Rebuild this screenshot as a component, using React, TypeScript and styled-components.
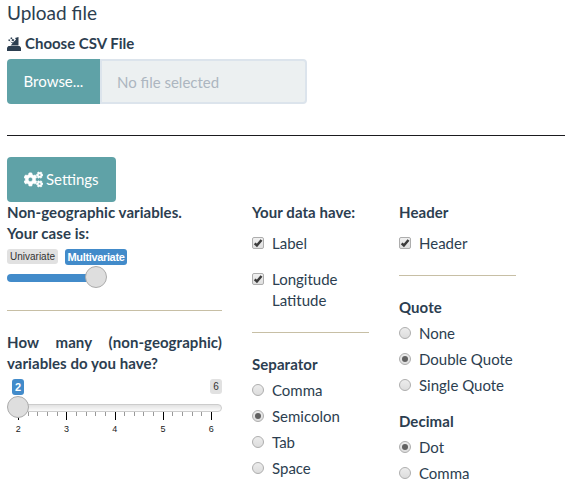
import React from 'react';
import styled, { createGlobalStyle } from 'styled-components';
import { FaCogs } from 'react-icons/fa';

const Global = createGlobalStyle`
  * { box-sizing: border-box; }
  body { margin: 0; background: #fff; color: #2c3e50; font: 15px/21px Lato, sans-serif; overflow: hidden; }
`;

const Page = styled.main`width: 572px; height: 495px; padding: 2px 7px 0; overflow: hidden;`;
const Title = styled.h4`margin: 0; font-size: 19px; line-height: 22px; font-weight: 400;`;
const FileLabel = styled.div`
  display: flex; align-items: center; gap: 4px; height: 21px; margin-top: 9px; font-weight: 700;
  svg { display: block; }
`;
const FileRow = styled.div`display: flex; width: 300px; height: 45px; margin-top: 5px;`;
const Browse = styled.button`
  width: 93px; padding: 0; border: 0; border-radius: 4px 0 0 4px;
  background: #5fa2a7; color: #fff; font: 15px/21px Lato, sans-serif;
`;
const FileName = styled.div`
  flex: 1; border: 2px solid #dce4ec; border-radius: 0 4px 4px 0; padding: 11px 15px;
  background: #ecf0f1; color: #acb6c0; line-height: 21px;
`;
const PageRule = styled.div`width: 558px; height: 1px; margin: 31px 0 21px; background: #1b1b1f;`;
const Settings = styled.button`
  display: flex; align-items: center; gap: 3px; width: 109px; height: 45px; padding: 0 0 0 17px;
  border: 0; border-radius: 4px; background: #5fa2a7; color: #fff; font: 15px/21px Lato, sans-serif;
  svg { stroke: #fff; stroke-width: 18px; }
`;
const Columns = styled.div`display: grid; grid-template-columns: 215px 117px 117px; column-gap: 30px;`;
const Column = styled.section`display: flex; flex-direction: column; min-width: 0;`;
const Heading = styled.div<{ $top?: number; $justify?: boolean }>`
  margin-top: ${p => p.$top ?? 0}px; font-weight: 700; line-height: 21px; letter-spacing: 0.06px;
  text-align: ${p => (p.$justify ? 'justify' : 'left')};
`;
const Rule = styled.div<{ $top: number; $bottom: number }>`
  height: 1px; margin: ${p => p.$top}px 0 ${p => p.$bottom}px; background: #c7bfa5;
`;
const Option = styled.label<{ $top: number }>`
  display: grid; grid-template-columns: 12px 1fr; column-gap: 8px; margin-top: ${p => p.$top}px; line-height: 21px;
  svg { margin-top: 4px; display: block; }
`;
const Tags = styled.div<{ $between?: boolean }>`
  display: flex; align-items: flex-start; height: 17px; margin-top: 5px;
  justify-content: ${p => (p.$between ? 'space-between' : 'flex-start')};
  gap: 7px; padding-left: ${p => (p.$between ? 5 : 0)}px;
`;
const Tag = styled.span<{ $active?: boolean; $width: number }>`
  width: ${p => p.$width}px; height: ${p => (p.$active ? 16 : 15)}px; border-radius: 3px; text-align: center;
  font: ${p => (p.$active ? '700 11px/16px' : '400 10px/16px')} "Liberation Sans", Arial, sans-serif;
  background: ${p => (p.$active ? '#428bca' : '#e1e1e1')}; color: ${p => (p.$active ? '#fff' : '#333')};
  white-space: nowrap; letter-spacing: ${p => (p.$active && p.$width > 20 ? '-0.35px' : 'normal')};
`;
const Slider = styled.div<{ $width: number }>`
  display: flex; align-items: center; width: ${p => p.$width}px; height: 22px;
`;
const Track = styled.div<{ $filled?: boolean }>`
  flex: 1; height: 8px; border-radius: ${p => (p.$filled ? '4px 0 0 4px' : '0 4px 4px 0')};
  background: ${p => (p.$filled ? '#428bca' : 'linear-gradient(#e2e2e2, #fafafa)')};
  border: ${p => (p.$filled ? '0' : '1px solid #ccc')};
  margin-top: 2px;
`;
const Knob = styled.div<{ $last?: boolean }>`
  position: relative; z-index: 1; flex: none; width: 22px; height: 22px;
  border: 1px solid #ababab; border-radius: 50%; background: #dedede;
  margin-left: ${p => (p.$last ? -2 : 0)}px; margin-right: ${p => (p.$last ? 0 : -2)}px;
`;
const Scale = styled.svg`display: block; width: 215px; height: 24px; margin-top: -6px; overflow: visible;`;

const UploadIcon = () => (
  <svg width="14" height="14" viewBox="0 0 14 14" fill="#2c3e50">
    <path d="M1.5 9h11L14 10.5V14H0v-3.5z" />
    <path d="M3 4.5L6 5.5 9 2.5 8 1 11.5 0v8.5H3.5L5.5 6.5z" />
    <path d="M4 .2l1.6.8-1 1.2-1.3-.8zM1.8 2.2l1.6.5-.8 1.5-1.4-.7zM5.3 2l2 .5L6.5 4.5 4.5 3.6z" />
  </svg>
);
const Check = () => (
  <svg width="12" height="12" viewBox="0 0 12 12">
    <defs><linearGradient id="box" x2="0" y2="1"><stop stopColor="#f1f1f1" /><stop offset="1" stopColor="#dedede" /></linearGradient></defs>
    <rect x=".5" y=".5" width="11" height="11" rx="1.5" fill="url(#box)" stroke="#adadad" />
    <path d="M2.7 6.3l2.2 2.2L9.5 3" fill="none" stroke="#3b3b3b" strokeWidth="2.5" />
  </svg>
);
const Radio = ({ on }: { on?: boolean }) => (
  <svg width="12" height="12" viewBox="0 0 12 12">
    <defs><linearGradient id="dial" x2="0" y2="1"><stop stopColor="#ededed" /><stop offset="1" stopColor="#dcdcdc" /></linearGradient></defs>
    <circle cx="6" cy="6" r="5.5" fill="url(#dial)" stroke="#aeaeae" />
    {on && <circle cx="6" cy="6" r="3" fill="#616161" />}
  </svg>
);

const Choices = ({ items, selected }: { items: string[]; selected: string }) => (
  <>
    {items.map(item => (
      <Option key={item} $top={5}><Radio on={item === selected} /><span>{item}</span></Option>
    ))}
  </>
);

const ticks = Array.from({ length: 21 }, (_, i) => i);

export default function App() {
  return (
    <Page>
      <Global />
      <Title>Upload file</Title>
      <FileLabel><UploadIcon /><span>Choose CSV File</span></FileLabel>
      <FileRow><Browse>Browse...</Browse><FileName>No file selected</FileName></FileRow>
      <PageRule />
      <Settings><FaCogs size={19} /><span>Settings</span></Settings>
      <Columns>
        <Column>
          <Heading>Non-geographic variables.<br />Your case is:</Heading>
          <Tags><Tag $width={51}>Univariate</Tag><Tag $active $width={62}>Multivariate</Tag></Tags>
          <Slider $width={100}><Track $filled /><Knob $last /></Slider>
          <Rule $top={22} $bottom={21} />
          <Heading $justify>How many (non-geographic) variables do you have?</Heading>
          <Tags $between><Tag $active $width={12}>2</Tag><Tag $width={12}>6</Tag></Tags>
          <Slider $width={215}><Knob /><Track /></Slider>
          <Scale>
            {ticks.map(i => {
              const x = Math.round(11 + i * 9.65) + 0.5;
              return <line key={i} x1={x} x2={x} y1="0" y2={i % 5 ? 4 : 8} stroke={i % 5 ? '#999' : '#000'} />;
            })}
            {[2, 3, 4, 5, 6].map((n, i) => (
              <text key={n} x={11.3 + i * 48.25} y="20" fontSize="9" textAnchor="middle" fontFamily="Liberation Sans" fill="#222">{n}</text>
            ))}
          </Scale>
        </Column>
        <Column>
          <Heading>Your data have:</Heading>
          <Option $top={10}><Check /><span>Label</span></Option>
          <Option $top={15}><Check /><span>Longitude Latitude</span></Option>
          <Rule $top={21} $bottom={21} />
          <Heading>Separator</Heading>
          <Choices items={['Comma', 'Semicolon', 'Tab', 'Space']} selected="Semicolon" />
        </Column>
        <Column>
          <Heading>Header</Heading>
          <Option $top={10}><Check /><span>Header</span></Option>
          <Rule $top={21} $bottom={21} />
          <Heading>Quote</Heading>
          <Choices items={['None', 'Double Quote', 'Single Quote']} selected="Double Quote" />
          <Heading $top={15}>Decimal</Heading>
          <Choices items={['Dot', 'Comma']} selected="Dot" />
        </Column>
      </Columns>
    </Page>
  );
}
